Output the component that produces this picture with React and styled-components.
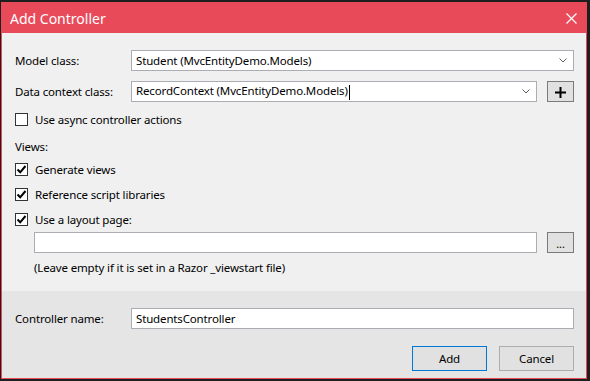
import styled, { createGlobalStyle } from "styled-components";

const Global = createGlobalStyle`
  html, body {
    margin: 0;
    padding: 0;
    background: #1e1e1e;
    width: 590px;
    height: 381px;
    overflow: hidden;
  }
  * { box-sizing: border-box; }
`;

const Page = styled.div`
  padding: 2px 0 0 1px;
  font-family: "Noto Sans", "Segoe UI", sans-serif;
  font-size: 11.5px;
  letter-spacing: -0.15px;
  color: #000;
`;

const Dialog = styled.div`
  width: 586px;
  height: 377px;
  border: 1px solid #e84a5a;
  background: #f0f0f0;
  display: flex;
  flex-direction: column;
`;

const TitleBar = styled.div`
  height: 30px;
  background: #e84a5a;
  color: #fff;
  display: flex;
  align-items: center;
  justify-content: space-between;
  padding: 0 9px 0 8px;
  font-size: 14px;
  letter-spacing: 0;
`;

const Close = styled.svg`
  width: 11px;
  height: 11px;
`;

const Body = styled.div`
  flex: 1;
  padding: 17px 12px 0 13px;
  display: flex;
  flex-direction: column;
`;

const FieldRow = styled.div`
  display: flex;
  align-items: center;
  height: 21px;
  margin-top: ${(p) => p.$mt || 0}px;
`;

const Label = styled.div`
  width: 116px;
  flex-shrink: 0;
`;

const Select = styled.div`
  flex: 1;
  height: 100%;
  background: #fff;
  border: 1px solid #abadb3;
  display: flex;
  align-items: center;
  padding: 0 6px 0 4px;
  & > span { flex: 1; white-space: nowrap; }
`;

const Caret = styled.div`
  width: 1px;
  height: 15px;
  background: #000;
  display: inline-block;
  vertical-align: middle;
  margin-left: 1px;
`;

const Chevron = styled.svg`
  width: 8px;
  height: 5px;
`;

const SmallButton = styled.div`
  width: 27px;
  height: 21px;
  margin-left: 10px;
  flex-shrink: 0;
  background: #e1e1e1;
  border: 1px solid #7a7a7a;
  display: flex;
  align-items: center;
  justify-content: center;
  font-size: 11px;
  padding-top: 2px;
`;

const CheckRow = styled.div`
  display: flex;
  align-items: center;
  height: 13px;
  margin-top: ${(p) => p.$mt || 0}px;
`;

const Box = styled.div`
  width: 13px;
  height: 13px;
  border: 1px solid #333;
  background: #fff;
  margin-right: 7px;
  display: flex;
  align-items: center;
  justify-content: center;
`;

const Text = styled.div`
  height: 15px;
  line-height: 15px;
  margin-top: ${(p) => p.$mt || 0}px;
  margin-left: ${(p) => p.$ml || 0}px;
`;

const PathRow = styled.div`
  display: flex;
  height: 21px;
  margin-top: 6px;
  margin-left: 19px;
`;

const PathInput = styled.div`
  flex: 1;
  background: #fff;
  border: 1px solid #abadb3;
`;

const Footer = styled.div`
  height: 87px;
  background: #e5e5e5;
  padding: 17px 12px 0 13px;
`;

const Buttons = styled.div`
  display: flex;
  justify-content: flex-end;
  gap: 12px;
  margin-top: 17px;
`;

const Button = styled.div`
  width: 75px;
  height: 25px;
  background: #e1e1e1;
  border: 1px solid ${(p) => (p.$primary ? "#0078d7" : "#adadad")};
  display: flex;
  align-items: center;
  justify-content: center;
`;

function Check({ checked, label, mt }) {
  return (
    <CheckRow $mt={mt}>
      <Box>
        {checked && (
          <svg width="11" height="11" viewBox="0 0 11 11">
            <path d="M1.5 5.5 L4.2 8.3 L9.5 2" fill="none" stroke="#000" strokeWidth="2" />
          </svg>
        )}
      </Box>
      <span>{label}</span>
    </CheckRow>
  );
}

function Arrow() {
  return (
    <Chevron viewBox="0 0 8 5">
      <path d="M0.5 0.5 L4 4 L7.5 0.5" fill="none" stroke="#606060" strokeWidth="1" />
    </Chevron>
  );
}

export default function App() {
  return (
    <Page>
      <Global />
      <Dialog>
        <TitleBar>
          <span>Add Controller</span>
          <Close viewBox="0 0 11 11">
            <path d="M0.5 0.5 L10.5 10.5 M10.5 0.5 L0.5 10.5" stroke="#fff" strokeWidth="1.2" />
          </Close>
        </TitleBar>
        <Body>
          <FieldRow>
            <Label>Model class:</Label>
            <Select>
              <span>Student (MvcEntityDemo.Models)</span>
              <Arrow />
            </Select>
          </FieldRow>
          <FieldRow $mt={10}>
            <Label>Data context class:</Label>
            <Select>
              <span>
                RecordContext (MvcEntityDemo.Models)<Caret />
              </span>
              <Arrow />
            </Select>
            <SmallButton>
              <svg width="11" height="11" viewBox="0 0 11 11">
                <path d="M5.5 0 V11 M0 5.5 H11" stroke="#000" strokeWidth="2" />
              </svg>
            </SmallButton>
          </FieldRow>
          <Check mt={11} label="Use async controller actions" />
          <Text $mt={13}>Views:</Text>
          <Check mt={9} checked label="Generate views" />
          <Check mt={12} checked label="Reference script libraries" />
          <Check mt={12} checked label="Use a layout page:" />
          <PathRow>
            <PathInput />
            <SmallButton>...</SmallButton>
          </PathRow>
          <Text $mt={7} $ml={19}>(Leave empty if it is set in a Razor _viewstart file)</Text>
        </Body>
        <Footer>
          <FieldRow>
            <Label>Controller name:</Label>
            <Select>
              <span>StudentsController</span>
            </Select>
          </FieldRow>
          <Buttons>
            <Button $primary>Add</Button>
            <Button>Cancel</Button>
          </Buttons>
        </Footer>
      </Dialog>
    </Page>
  );
}
